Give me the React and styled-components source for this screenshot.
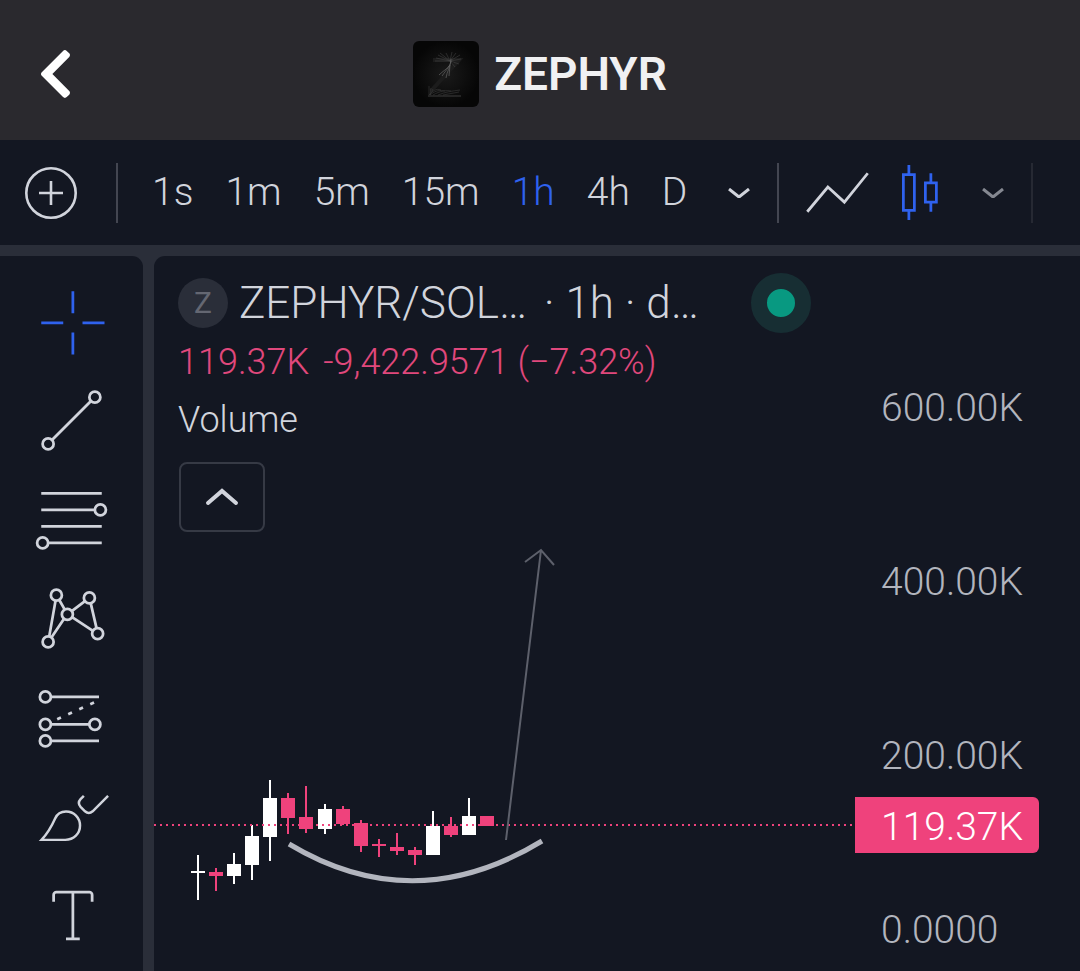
import React, { useState } from 'react';
import styled, { createGlobalStyle } from 'styled-components';
import { FaChevronLeft } from 'react-icons/fa';

const intervals = ['1s', '1m', '5m', '15m', '1h', '4h', 'D'];

const prices = ['600.00K', '400.00K', '200.00K', '0.0000'];

// x, wick top, wick bottom, body top, body bottom, up
const candles = [
    [44, 323, 368, 339, 341, true],
    [62, 336, 359, 340, 344, false],
    [80, 321, 352, 332, 344, true],
    [98, 293, 348, 304, 333, true],
    [116, 248, 329, 266, 305, true],
    [134, 261, 302, 266, 286, false],
    [152, 254, 301, 285, 297, false],
    [171, 272, 302, 277, 297, true],
    [189, 274, 293, 277, 292, false],
    [207, 288, 320, 291, 314, false],
    [225, 307, 325, 312, 314, false],
    [243, 301, 323, 315, 319, false],
    [261, 315, 333, 318, 323, false],
    [279, 279, 323, 294, 323, true],
    [297, 285, 305, 294, 303, false],
    [315, 266, 303, 284, 303, true],
    [333, 284, 294, 284, 294, false],
];

const tools = [
    {
        name: 'Cross',
        icon: <path d="M14.5 3v8M14.5 18v8M3 14.5h8M18 14.5h8" />,
    },
    {
        name: 'Trend line',
        icon: (
            <>
                <path d="M7 21L21 7" />
                <circle cx="5.5" cy="22.5" r="2" />
                <circle cx="22.5" cy="5.5" r="2" />
            </>
        ),
    },
    {
        name: 'Fib retracement',
        icon: (
            <>
                <path d="M3 4.5h22M3 10.5h19.5M3 16.5h22M5.5 22.5H25" />
                <circle cx="24.5" cy="10.5" r="2" />
                <circle cx="3.5" cy="22.5" r="2" />
            </>
        ),
    },
    {
        name: 'XABCD pattern',
        icon: (
            <>
                <path d="M5.9 20.5L8.2 7.5M9.5 7.2l2 3.5M14.1 11.3l4.8-3.6M21 8.5l2.1 9M21.8 18.5l-7.6-5M6.7 20.9l4.6-6.8" />
                <circle cx="8.5" cy="5.5" r="2" />
                <circle cx="20.5" cy="6.5" r="2" />
                <circle cx="12.5" cy="12.5" r="2" />
                <circle cx="5.5" cy="22.5" r="2" />
                <circle cx="23.5" cy="19.5" r="2" />
            </>
        ),
    },
    {
        name: 'Long position',
        icon: (
            <>
                <path d="M6.5 6.5H24M6.5 16.5h14M6.5 22.5H24" />
                <path d="M8.8 14.6L22.5 8.4" strokeDasharray="1.5 2.9" />
                <circle cx="4.5" cy="6.5" r="2" />
                <circle cx="4.5" cy="16.5" r="2" />
                <circle cx="22.5" cy="16.5" r="2" />
                <circle cx="4.5" cy="22.5" r="2" />
            </>
        ),
    },
    {
        name: 'Brush',
        icon: (
            <>
                <path strokeWidth="0.9" d="M3.1 22.5h8.6c3.2 0 5.4-2.3 5.4-5.2s-2.2-5.1-5.1-5.1c-1.9 0-3.2.8-4 2.6C6.9 17.3 6 19.3 3.1 22.5z" />
                <path strokeWidth="0.9" d="M18.5 6.5l-1.2 1.2c-.8.9-.8 1.9 0 2.8l1.6 1.6c.9.8 1.9.8 2.8 0l5.6-5.6" />
            </>
        ),
    },
    {
        name: 'Text',
        icon: <path d="M7.5 9V6.5a1 1 0 0 1 1-1h12a1 1 0 0 1 1 1V9M14.5 5.5v17M12 22.5h5" />,
    },
];

const Chevron = () => (
    <svg width="22" height="10" viewBox="0 0 22 10" fill="none" stroke="currentColor" strokeWidth="3">
        <path d="M1 1l10 8 10-8" />
    </svg>
);

const Logo = () => (
    <LogoArt viewBox="0 0 66 66" fill="none">
        <defs>
            <radialGradient id="glow">
                <stop offset="0" stopColor="#1a1a1a" />
                <stop offset="1" stopColor="#060606" />
            </radialGradient>
        </defs>
        <rect width="66" height="66" rx="6" fill="url(#glow)" />
        <path d="M20 19h26L18 50" stroke="#1c1c1c" strokeWidth="4" />
        <path
            d="M37 20l-14-3M37 20l-15 0M37 20l-10-8M37 20l-4-8M37 20l2-9M37 20l6-8M37 20l10-6M37 20l11-2M37 20l9 3M37 20l5 6M37 20l-12-6"
            stroke="#484848"
            strokeWidth="0.5"
        />
        <path d="M38 18c0 7-5 11-9 17M38 20c-1 7-4 10-5 17M37 24c-3 4-7 6-11 10M37 24l-1 11" stroke="#666666" strokeWidth="0.7" />
        <path
            d="M16 54c4-4 7-7 12-5M17 54c6-5 10-5 15-4M20 54c7-4 13-5 18-4M25 54c7-3 14-4 22-5M30 54l16-3M16 45v9M18 47l-1 7M20 48l-3 6"
            stroke="#3a3a3a"
            strokeWidth="0.6"
        />
        <path d="M15 55h33" stroke="#3e3e3e" />
    </LogoArt>
);

const App = () => {
    const [interval, setInterval] = useState('1h');
    const [tool, setTool] = useState('Cross');
    const [open, setOpen] = useState(true);

    return (
        <Page>
            <GlobalStyle />
            <Header>
                <Back aria-label="Back">
                    <FaChevronLeft size={56} />
                </Back>
                <Token>
                    <Logo />
                    <h1>ZEPHYR</h1>
                </Token>
            </Header>
            <Toolbar>
                <IconButton aria-label="Compare">
                    <svg width="52" height="52" viewBox="0 0 52 52" fill="none" stroke="currentColor" strokeWidth="2.6">
                        <circle cx="26" cy="26" r="24.7" />
                        <path d="M14 26h24M26 14v24" />
                    </svg>
                </IconButton>
                <Divider />
                <Intervals>
                    {intervals.map((item) => (
                        <Interval key={item} $active={item === interval} onClick={() => setInterval(item)}>
                            {item}
                        </Interval>
                    ))}
                </Intervals>
                <MoreButton aria-label="More intervals">
                    <Chevron />
                </MoreButton>
                <Divider />
                <ChartTypes>
                    <IconButton aria-label="Line">
                        <Icon viewBox="0 0 28 28">
                            <path d="M3 21l7.5-9 6 5.5L25 7" />
                        </Icon>
                    </IconButton>
                    <IconButton $active aria-label="Candles">
                        <Icon viewBox="0 0 28 28">
                            <path d="M8.5 7.5h4v13h-4zM10.5 4v3.5M10.5 20.5V24M16.5 10.5h4v7h-4zM18.5 7v3.5M18.5 17.5V21" />
                        </Icon>
                    </IconButton>
                </ChartTypes>
                <MoreButton $dim aria-label="More chart types">
                    <Chevron />
                </MoreButton>
                <Divider $dim />
            </Toolbar>
            <Body>
                <Sidebar>
                    {tools.map(({ name, icon }) => (
                        <IconButton key={name} aria-label={name} $active={name === tool} onClick={() => setTool(name)}>
                            <Icon viewBox="0 0 28 28">{icon}</Icon>
                        </IconButton>
                    ))}
                </Sidebar>
                <Pane>
                    <Plot>
                        <Legend>
                            <Symbol>
                                <Badge>Z</Badge>
                                <h2>
                                    <span>ZEPHYR/SOL…</span>
                                    <span> · 1h · d…</span>
                                </h2>
                                <Status />
                            </Symbol>
                            <Values>
                                <span>119.37K</span>
                                <span>-9,422.9571 (−7.32%)</span>
                            </Values>
                            <Study>Volume</Study>
                            <Toggle aria-label="Toggle legend" aria-expanded={open} onClick={() => setOpen(!open)}>
                                <svg width="34" height="20" viewBox="0 0 34 20" fill="none" stroke="currentColor" strokeWidth="4">
                                    <path d="M3 16L17 4l14 12" strokeLinecap="round" />
                                </svg>
                            </Toggle>
                        </Legend>
                        <Drawing>
                            {candles.map(([x, high, low, top, bottom, up]) => (
                                <g key={x} fill={up ? '#ffffff' : '#ef427c'}>
                                    <rect x={x - 1} y={high} width="2" height={low - high} />
                                    <rect x={x - 7} y={top} width="14" height={bottom - top} />
                                </g>
                            ))}
                            <line x1="0" y1="293" x2="100%" y2="293" stroke="#ef427c" strokeWidth="2" strokeDasharray="2 4" />
                            <path d="M352 308L387 18M371 30l16-12 13 15" stroke="#5d606b" strokeWidth="2" fill="none" />
                            <path d="M135 312Q260 387 388 309" stroke="#b2b5be" strokeWidth="5" fill="none" />
                        </Drawing>
                    </Plot>
                    <Axis>
                        {prices.map((price) => (
                            <Price key={price}>{price}</Price>
                        ))}
                        <LastPrice>119.37K</LastPrice>
                    </Axis>
                </Pane>
            </Body>
        </Page>
    );
};

const GlobalStyle = createGlobalStyle`
    *{
        box-sizing:border-box;
    }
    body{
        margin:0;
        background:#2a2e39;
    }
    h1,h2,p{
        margin:0;
        font-weight:inherit;
    }
    button{
        border:0;
        padding:0;
        background:none;
        color:inherit;
        font:inherit;
        cursor:pointer;
    }
    svg{
        display:block;
        flex-shrink:0;
    }
`;

const Page = styled.div`
    display:flex;
    flex-direction:column;
    height:100vh;
    overflow:hidden;
    color:#d1d4dc;
    font-family:Roboto, 'Liberation Sans', sans-serif;
    font-weight:300;
`;

const Header = styled.header`
    display:grid;
    grid-template-columns:1fr auto 1fr;
    align-items:center;
    flex-shrink:0;
    height:140px;
    padding:8px 38px 0;
    background:#2a292e;
`;

const Back = styled.button`
    justify-self:start;
    color:#ffffff;
    svg{
        width:35px;
    }
`;

const Token = styled.div`
    display:flex;
    align-items:center;
    gap:15px;
    h1{
        color:#f0f0f2;
        font-size:46px;
        font-weight:600;
        line-height:56px;
    }
`;

const LogoArt = styled.svg`
    width:66px;
    height:66px;
`;

const Toolbar = styled.nav`
    display:flex;
    align-items:center;
    flex-shrink:0;
    height:105px;
    padding-left:25px;
    background:#131722;
`;

const IconButton = styled.button`
    color:${(props) => (props.$active ? '#2f62ee' : '#d1d4dc')};
`;

const Icon = styled.svg`
    width:77px;
    height:77px;
    overflow:visible;
    fill:none;
    stroke:currentColor;
`;

const Divider = styled.span`
    flex-shrink:0;
    width:2px;
    height:60px;
    background:${(props) => (props.$dim ? '#262933' : '#434651')};
    ${IconButton} + &{
        margin-left:39px;
    }
`;

const Intervals = styled.div`
    display:flex;
    gap:32px;
    margin:0 16px 0 34px;
    padding-bottom:2px;
`;

const Interval = styled.button`
    color:${(props) => (props.$active ? '#2f62ee' : '#d1d4dc')};
    font-size:39px;
    line-height:60px;
`;

const MoreButton = styled.button`
    padding:25px 27px 25px 25px;
    opacity:${(props) => (props.$dim ? 0.6 : 1)};
`;

const ChartTypes = styled.div`
    display:flex;
    gap:4px;
    margin-left:20px;
`;

const Body = styled.main`
    display:flex;
    flex:1;
    gap:11px;
    min-height:0;
    padding-top:11px;
`;

const Sidebar = styled.aside`
    display:flex;
    flex-direction:column;
    align-items:center;
    flex-shrink:0;
    gap:22px;
    width:143px;
    padding-top:27px;
    overflow:hidden;
    background:#131722;
    border-radius:0 11px 0 0;
`;

const Pane = styled.section`
    display:flex;
    flex:1;
    min-width:0;
    overflow:hidden;
    background:#131722;
    border-radius:11px 0 0 0;
`;

const Plot = styled.div`
    display:flex;
    flex-direction:column;
    flex:1;
    min-width:0;
`;

const Legend = styled.div`
    padding:17px 0 0 24px;
`;

const Symbol = styled.div`
    display:flex;
    align-items:center;
    height:60px;
    h2{
        display:flex;
        gap:6px;
        margin:0 52px 0 11px;
        font-size:44px;
        line-height:60px;
        white-space:pre;
    }
`;

const Badge = styled.span`
    width:50px;
    height:50px;
    border-radius:50%;
    background:#2a2e39;
    color:#646772;
    font-size:30px;
    font-weight:400;
    line-height:50px;
    text-align:center;
`;

const Status = styled.span`
    width:60px;
    height:60px;
    border:16px solid #172e33;
    border-radius:50%;
    background:#089981;
`;

const Values = styled.p`
    display:flex;
    gap:14px;
    color:#e0487c;
    font-size:36px;
    line-height:58px;
    white-space:nowrap;
`;

const Study = styled.p`
    font-size:36px;
    line-height:58px;
`;

const Toggle = styled.button`
    display:flex;
    align-items:center;
    justify-content:center;
    width:86px;
    height:70px;
    margin:13px 0 0 1px;
    border:2px solid #363a45;
    border-radius:8px;
`;

const Drawing = styled.svg`
    flex:1;
    width:100%;
    min-height:0;
`;

const Axis = styled.div`
    position:relative;
    flex-shrink:0;
    width:225px;
    padding-top:65px;
    color:#b2b5be;
    font-size:39px;
`;

const Price = styled.div`
    padding-left:26px;
    line-height:174px;
`;

const LastPrice = styled.div`
    position:absolute;
    top:541px;
    left:0;
    width:184px;
    padding:4px 0 0 26px;
    border-radius:0 6px 6px 0;
    background:#ef427c;
    color:#ffffff;
    line-height:52px;
`;

export default App;
